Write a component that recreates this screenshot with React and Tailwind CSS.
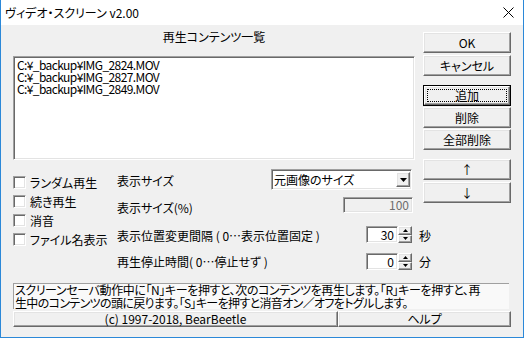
import React from "react";

const jp = "font-['Noto_Sans_CJK_JP',sans-serif] [font-feature-settings:'palt']";
const raised =
  "bg-[#f0f0f0] border border-t-white border-l-white border-r-[#696969] border-b-[#696969] shadow-[inset_-1px_-1px_0_#a0a0a0,inset_1px_1px_0_#e3e3e3]";
const sunken =
  "border border-t-[#a0a0a0] border-l-[#a0a0a0] border-r-white border-b-white shadow-[inset_1px_1px_0_#696969,inset_-1px_-1px_0_#e3e3e3]";

const Btn = ({ children, className = "" }) => (
  <div className={`${raised} flex items-center justify-center text-[12px] leading-[12px] text-black ${className}`}>
    {children}
  </div>
);

const Check = ({ label }) => (
  <div className="flex items-center h-[19px]">
    <span className={`${sunken} w-[13px] h-[13px] bg-white shrink-0`} />
    <span className="ml-[4px] text-[12px] leading-[12px] whitespace-nowrap">{label}</span>
  </div>
);

const Spinner = ({ value }) => (
  <div className="flex h-[17px]">
    <div className={`${sunken} w-[32px] bg-white flex items-center justify-end pr-[3px] text-[12px] leading-[12px]`}>
      {value}
    </div>
    <div className="flex flex-col w-[14px]">
      <div className={`${raised} flex-1 flex items-center justify-center`}>
        <svg width="5" height="3" viewBox="0 0 5 3"><path d="M2.5 0 L5 3 L0 3 Z" fill="#000" /></svg>
      </div>
      <div className={`${raised} flex-1 flex items-center justify-center`}>
        <svg width="5" height="3" viewBox="0 0 5 3"><path d="M0 0 L5 0 L2.5 3 Z" fill="#000" /></svg>
      </div>
    </div>
  </div>
);

export default function App() {
  const files = [
    "C:¥_backup¥IMG_2824.MOV",
    "C:¥_backup¥IMG_2827.MOV",
    "C:¥_backup¥IMG_2849.MOV",
  ];

  return (
    <div className={`${jp} w-[524px] h-[338px] flex flex-col border-x border-b border-[#2b88d8] bg-white text-black overflow-hidden`}>
      {/* title bar */}
      <div className="h-[25px] shrink-0 flex items-center justify-between pl-[4px] pr-[9px] bg-white">
        <span className="text-[12px] leading-[12px] font-['Noto_Sans_CJK_JP',sans-serif]">ヴィデオ・スクリーン v2.00</span>
        <svg width="11" height="11" viewBox="0 0 11 11">
          <path d="M0.5 0.5 L10.5 10.5 M10.5 0.5 L0.5 10.5" stroke="#000" strokeWidth="1" />
        </svg>
      </div>

      <div className="flex-1 bg-[#f0f0f0] pl-[12px] flex flex-col">
        {/* top section */}
        <div className="flex">
          <div className="w-[402px] flex flex-col">
            <div className="h-[31px] pt-[6px] text-center text-[12px] leading-[12px]">再生コンテンツ一覧</div>
            <div className={`${sunken} h-[104px] bg-white pl-[2px] pt-[2px] flex flex-col`}>
              {files.map((f) => (
                <div
                  key={f}
                  className="h-[12px] leading-[12px] text-[12px] tracking-[-0.6px] [font-feature-settings:normal] pl-[1px] whitespace-nowrap"
                >
                  {f}
                </div>
              ))}
            </div>
          </div>
          <div className="ml-[8px] w-[88px] pt-[7px] flex flex-col">
            <Btn className="h-[21px]">OK</Btn>
            <Btn className="h-[21px] mt-[2px]">キャンセル</Btn>
            <div className="h-[21px] mt-[9px] border border-black flex">
              <div className={`${raised} flex-1 p-[2px] flex`}>
                <div className="flex-1 border border-dotted border-black flex items-center justify-center text-[12px] leading-[12px]">
                  追加
                </div>
              </div>
            </div>
            <Btn className="h-[21px] mt-[1px]">削除</Btn>
            <Btn className="h-[21px] mt-[1px]">全部削除</Btn>
          </div>
        </div>

        {/* middle section */}
        <div className="flex">
          <div className="w-[104px] pt-[13px] flex flex-col">
            <Check label="ランダム再生" />
            <Check label="続き再生" />
            <Check label="消音" />
            <Check label="ファイル名表示" />
          </div>

          <div className="w-[306px] flex flex-col text-[12px] leading-[12px]">
            <div className="mt-[9px] h-[21px] flex items-center">
              <span className="w-[154px] shrink-0 pt-[3px] whitespace-nowrap">表示サイズ</span>
              <div className={`${sunken} w-[141px] h-full bg-white flex items-center justify-between pl-[2px] pr-[1px]`}>
                <span>元画像のサイズ</span>
                <div className={`${raised} w-[14px] h-[15px] flex items-center justify-center`}>
                  <svg width="7" height="4" viewBox="0 0 7 4"><path d="M0 0 L7 0 L3.5 4 Z" fill="#000" /></svg>
                </div>
              </div>
            </div>
            <div className="mt-[7px] h-[16px] flex items-center">
              <span className="w-[226px] shrink-0 pt-[6px] whitespace-nowrap">表示サイズ(%)</span>
              <div className={`${sunken} w-[70px] h-full bg-[#f0f0f0] flex items-center justify-end pr-[3px] text-[#6d6d6d]`}>
                100
              </div>
            </div>
            <div className="mt-[13px] h-[17px] flex items-center">
              <span className="w-[249px] shrink-0 pt-[3px] whitespace-nowrap">表示位置変更間隔 ( 0…表示位置固定 )</span>
              <Spinner value="30" />
              <span className="ml-[7px] pt-[3px]">秒</span>
            </div>
            <div className="mt-[10px] h-[17px] flex items-center">
              <span className="w-[249px] shrink-0 whitespace-nowrap">再生停止時間( 0…停止せず )</span>
              <Spinner value="0" />
              <span className="ml-[7px]">分</span>
            </div>
          </div>

          <div className="w-[88px] -mt-px flex flex-col">
            <Btn className="h-[21px]">↑</Btn>
            <Btn className="h-[21px] mt-[2px]">↓</Btn>
          </div>
        </div>

        {/* bottom */}
        <div className="mt-[13px] w-[496px] h-[26px] bg-[#f9f9f9] border-t border-l border-[#a0a0a0] pl-[1px] text-[12px] leading-[13px] whitespace-nowrap">
          <div className="h-[13px] -mt-px tracking-[-0.4px]">スクリーンセーバ動作中に「N」キーを押すと、次のコンテンツを再生します。「R」キーを押すと、再</div>
          <div className="h-[13px] tracking-[-0.65px]">生中のコンテンツの頭に戻ります。「S」キーを押すと消音オン／オフをトグルします。</div>
        </div>
        <div className="mt-[2px] flex h-[16px]">
          <Btn className="w-[325px] h-full">(c) 1997-2018, BearBeetle</Btn>
          <Btn className="w-[173px] h-full">ヘルプ</Btn>
        </div>
      </div>
    </div>
  );
}
